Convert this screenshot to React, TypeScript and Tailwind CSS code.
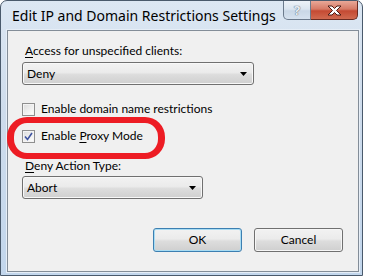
import React from "react";

const font = { fontFamily: '"Noto Sans", "Open Sans", sans-serif' };
const body = { fontFamily: 'Lato, "Noto Sans", sans-serif' };

function Combo({ value, width }: { value: string; width: string }) {
  return (
    <div
      className={`${width} h-[23px] rounded-[3px] border border-[#707070] bg-[linear-gradient(#f2f2f2,#ebebeb_45%,#dddddd_55%,#cfcfcf)] flex items-center pl-[4px] pr-[4px] shadow-[inset_0_0_0_1px_#f8f8f8]`}
    >
      <span className="text-[12px] leading-[16px] text-black">{value}</span>
      <svg className="ml-auto mr-[2px]" width="7" height="4" viewBox="0 0 7 4">
        <path d="M0 0H7L3.5 4Z" fill="#000" />
      </svg>
    </div>
  );
}

function Check({ checked }: { checked?: boolean }) {
  return (
    <div className="w-[13px] h-[13px] border border-[#8f8f8f] bg-[linear-gradient(135deg,#dcdcdc,#ffffff)] flex items-center justify-center shrink-0 shadow-[inset_0_0_0_1px_#f4f4f4]">
      {checked && (
        <svg width="9" height="9" viewBox="0 0 9 9">
          <path d="M1 4.5L3.5 7.5L8 1" fill="none" stroke="#3f54a0" strokeWidth="1.6" />
        </svg>
      )}
    </div>
  );
}

function Btn({ label, def }: { label: string; def?: boolean }) {
  return (
    <div
      className={`w-[89px] h-[24px] rounded-[3px] border ${
        def ? "border-[#3c7fb1] shadow-[inset_0_0_0_1px_#a8dcf3]" : "border-[#707070] shadow-[inset_0_0_0_1px_#f6f6f6]"
      } bg-[linear-gradient(#f2f2f2,#ebebeb_45%,#dddddd_55%,#cfcfcf)] flex items-center justify-center`}
    >
      <span className="text-[12px] leading-[16px] text-black">{label}</span>
    </div>
  );
}

export default function App() {
  return (
    <div className="w-[366px] h-[277px] bg-white relative" style={font}>
      <div className="w-[363px] h-[276px] rounded-t-[7px] border border-[#4a5a6c] bg-[linear-gradient(#dce7f3,#cedcec_40%,#c2d6ec)] flex flex-col">
        <div className="h-[29px] flex items-start">
          <div className="pl-[11px] pt-[6px] text-[14px] leading-[18px] text-black">
            Edit IP and Domain Restrictions Settings
          </div>
          <div className="ml-auto mr-[4px] flex">
            <div className="w-[28px] h-[19px] rounded-bl-[5px] border border-t-0 border-[#6b7a8c] bg-[linear-gradient(#edf2f8,#dbe5f0_45%,#c9d7e6_55%,#d6e2ef)] flex items-center justify-center">
              <span className="text-[13px] leading-[14px] font-bold text-[#e8eef5] [text-shadow:0_0_1px_#5a6878,0_0_1px_#5a6878]">?</span>
            </div>
            <div className="w-[47px] h-[19px] rounded-br-[5px] border border-t-0 border-l-0 border-[#6a2b22] bg-[linear-gradient(#e9a898,#d67a66_45%,#c44a33_55%,#d06a50)] flex items-center justify-center">
              <svg width="15" height="11" viewBox="0 0 15 11">
                <path
                  d="M1 1H5L7.5 3.5L10 1H14L9.5 5.5L14 10H10L7.5 7.5L5 10H1L5.5 5.5Z"
                  fill="#ffffff"
                  stroke="#4a1a14"
                  strokeWidth="1"
                  strokeLinejoin="round"
                />
              </svg>
            </div>
          </div>
        </div>
        <div className="ml-[6px] w-[352px] h-[242px] border border-[#838d98] bg-[#f0f0f0] shadow-[0_0_0_1px_#e6eef7] flex flex-col relative" style={body}>
          <div className="pl-[17px] mt-[12px] text-[12px] leading-[16px] text-black">
            <u className="underline-offset-2">A</u>ccess for unspecified clients:
          </div>
          <div className="pl-[14px] mt-[3px]">
            <Combo value="Deny" width="w-[232px]" />
          </div>
          <div className="pl-[14px] mt-[16px] flex items-center gap-[6px] h-[16px]">
            <Check />
            <span className="text-[12px] leading-[16px] text-black">Enable domain name restrictions</span>
          </div>
          <div className="pl-[14px] mt-[11px] flex items-center gap-[6px] h-[16px]">
            <Check checked />
            <span className="text-[12px] leading-[16px] text-black">
              Enable <u className="underline-offset-2">P</u>roxy Mode
            </span>
          </div>
          <div className="pl-[17px] mt-[14px] text-[12px] leading-[16px] text-black">
            <u className="underline-offset-2">D</u>eny Action Type:
          </div>
          <div className="pl-[14px] mt-[2px]">
            <Combo value="Abort" width="w-[181px]" />
          </div>
          <div className="mt-[29px] flex justify-end gap-[12px] pr-[15px]">
            <Btn label="OK" def />
            <Btn label="Cancel" />
          </div>
          <div className="absolute left-[-1px] top-[86px] w-[158px] h-[42px] border-x-[7px] border-y-[6px] border-[#ed1c24] rounded-[20px]" />
        </div>
      </div>
    </div>
  );
}
